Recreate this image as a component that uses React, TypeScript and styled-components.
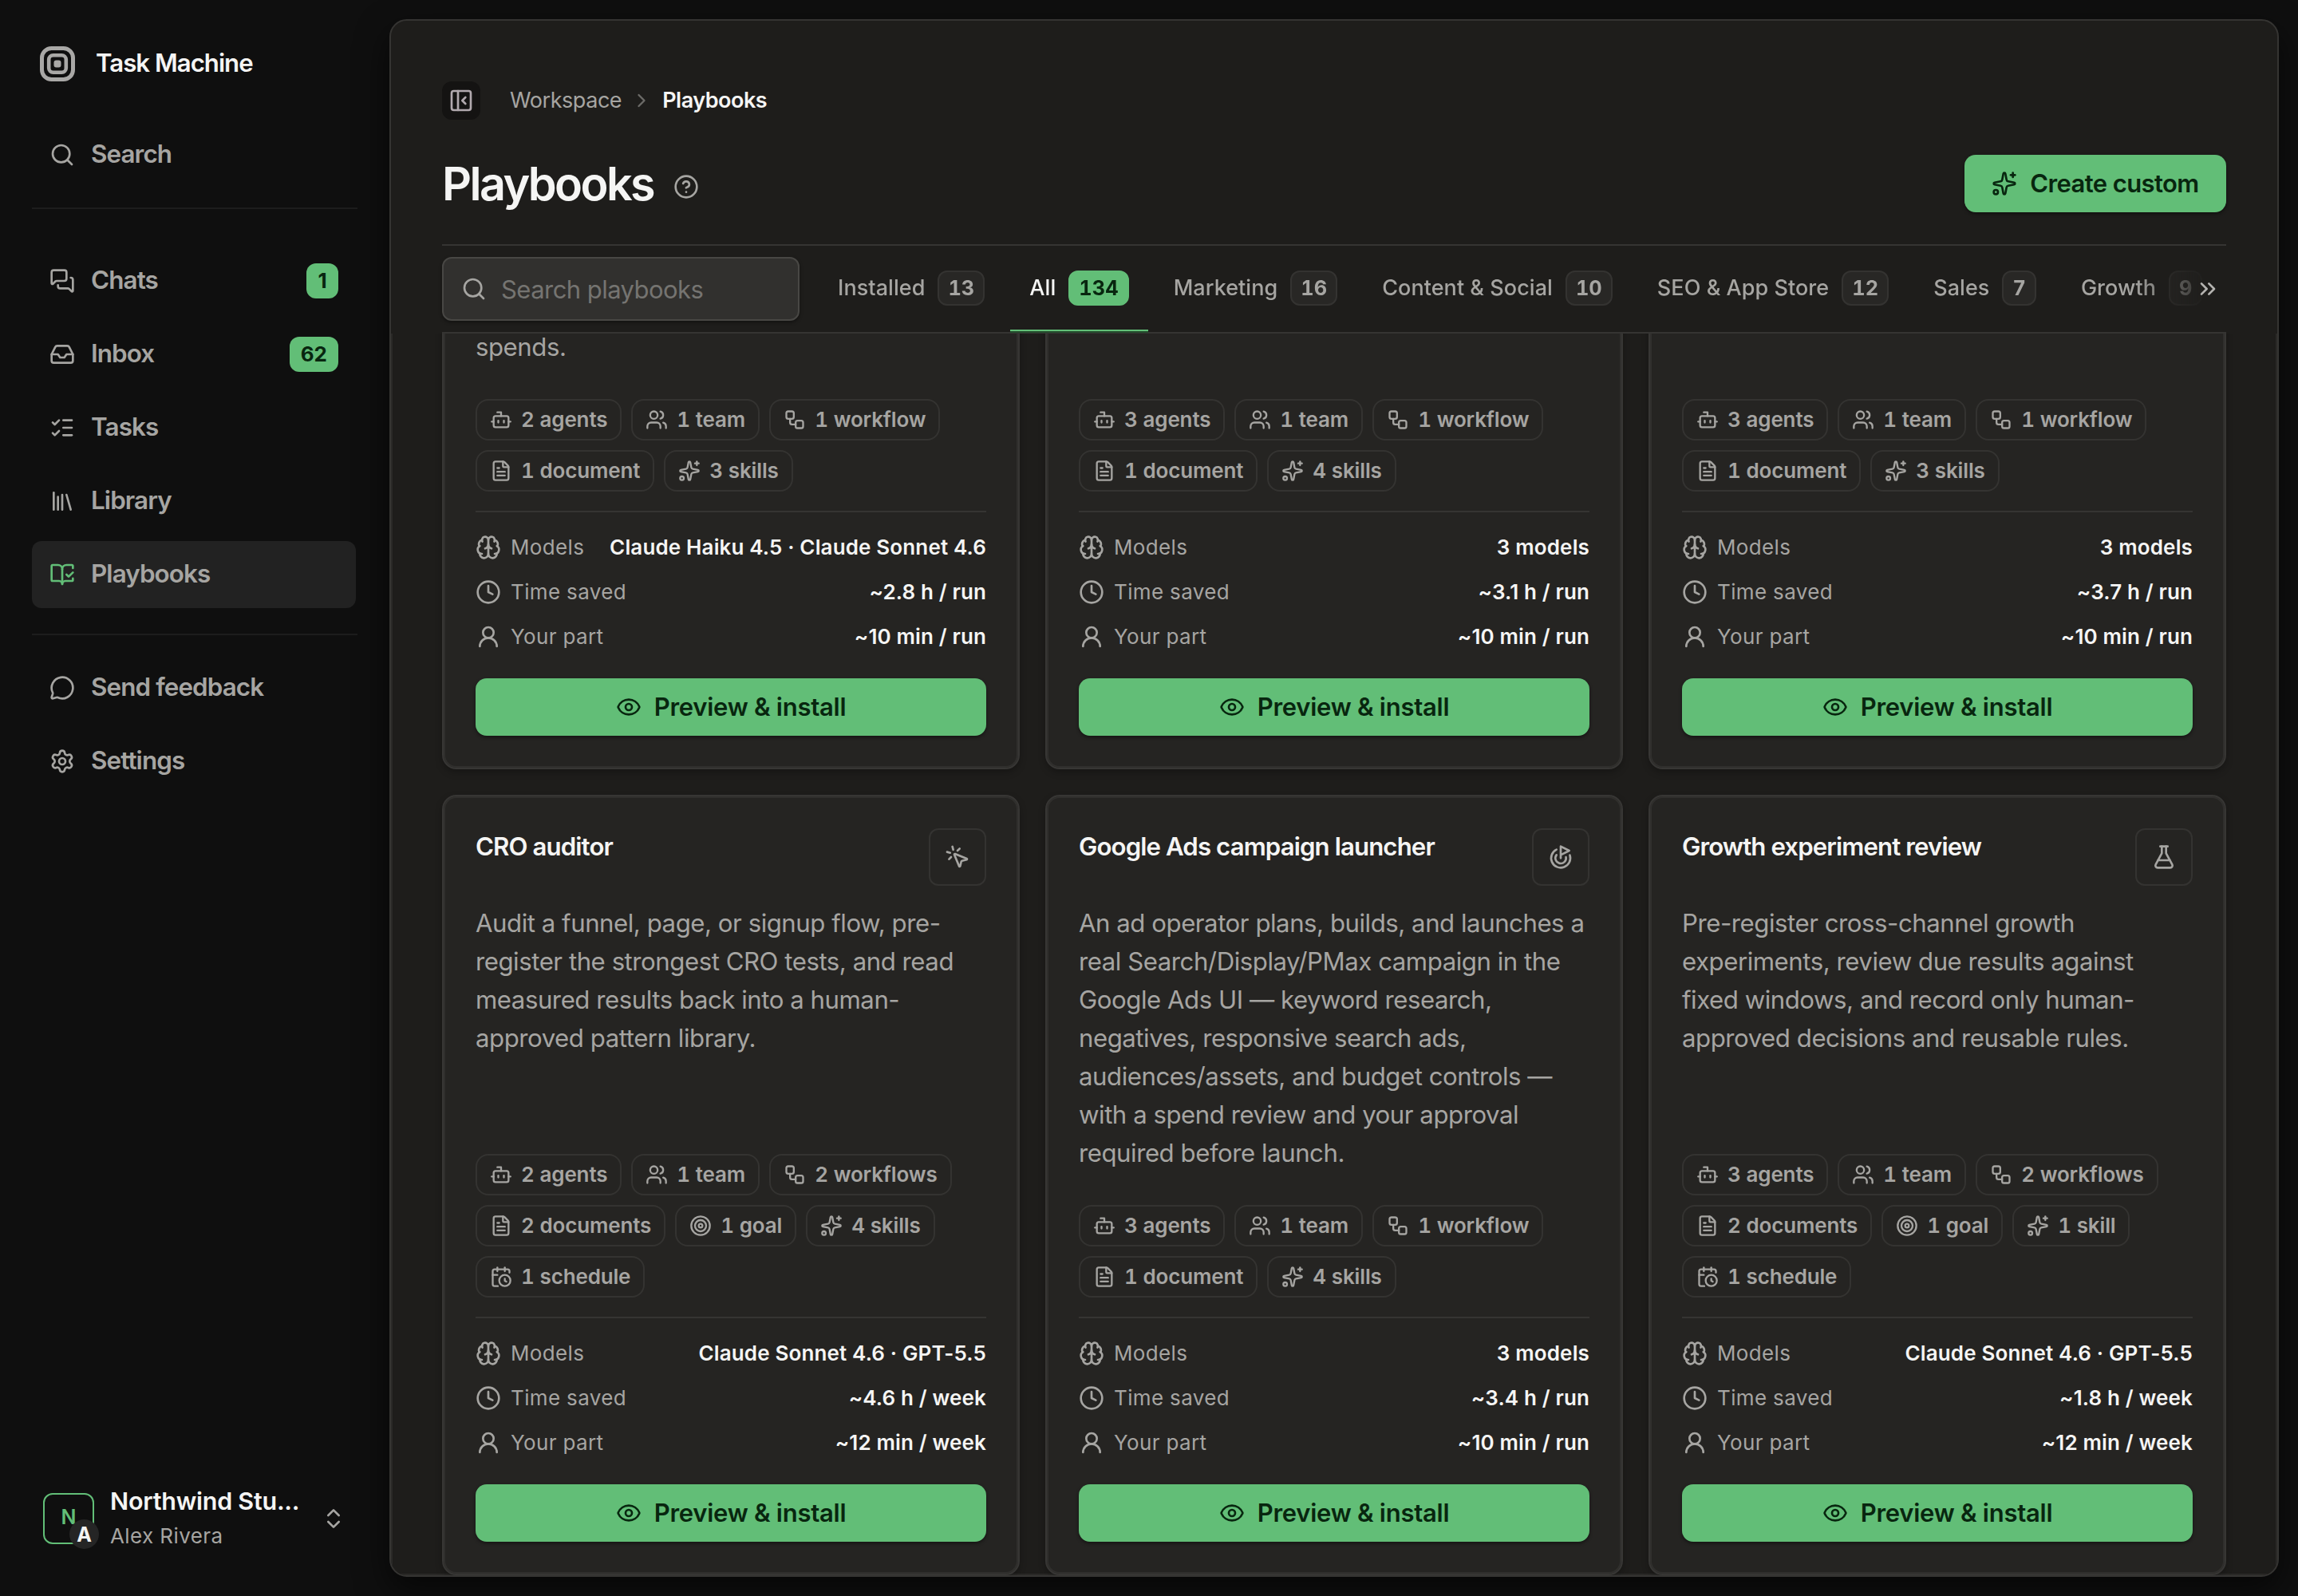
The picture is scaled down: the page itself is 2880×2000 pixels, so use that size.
import type { ReactNode } from 'react';
import styled, { createGlobalStyle, css } from 'styled-components';
import {
  BookOpenCheck,
  Bot,
  Brain,
  CalendarClock,
  ChevronRight,
  ChevronsRight,
  ChevronsUpDown,
  CircleQuestionMark,
  Clock,
  Eye,
  FileText,
  FlaskConical,
  Goal,
  Inbox,
  Library,
  ListChecks,
  MessageCircle,
  MessagesSquare,
  MousePointerClick,
  PanelLeftClose,
  Search,
  Settings,
  Sparkles,
  Target,
  UserRound,
  Users,
  Workflow,
  type LucideIcon,
} from 'lucide-react';

const GlobalStyle = createGlobalStyle`
  *, *::before, *::after {
    box-sizing: border-box;
  }

  body {
    margin: 0;
    background: #0f0f0f;
    color: #f5f5f4;
    font-family: Inter, "Liberation Sans", sans-serif;
    font-size: 31px;
  }

  button, input {
    font: inherit;
    color: inherit;
    border: 0;
    padding: 0;
  }

  svg {
    flex-shrink: 0;
  }
`;

const colors = {
  green: '#62be77',
  onGreen: '#08260f',
  muted: '#a6a5a2',
  text: '#f5f5f4',
  panel: '#1e1d1b',
  card: '#252422',
  line: '#353432',
};

const Shell = styled.div`
  display: grid;
  grid-template-columns: 488px 1fr;
  width: 2880px;
  height: 2000px;
  overflow: hidden;
`;

/* Text beside an icon sits a hair above the icon's centre line */
const Label = styled.span`
  padding-bottom: 2px;
`;

/* ---------- sidebar ---------- */

const Sidebar = styled.aside`
  display: flex;
  flex-direction: column;
  padding: 46px 40px 53px;
`;

const Brand = styled.div`
  display: flex;
  align-items: center;
  gap: 26px;
  height: 68px;
  padding-left: 10px;
  margin-bottom: 38px;
  font-size: 31.2px;
  font-weight: 600;
  letter-spacing: -1px;
`;

const NavGroup = styled.nav`
  display: flex;
  flex-direction: column;
  gap: 8px;
`;

const Divider = styled.hr<{ $before: number; $after: number }>`
  width: 408px;
  height: 2px;
  margin: ${({ $before, $after }) => `${$before}px 0 ${$after}px`};
  border: 0;
  background: #1d1d1d;
`;

const NavItem = styled.a<{ $active?: boolean }>`
  display: flex;
  align-items: center;
  gap: 20px;
  width: 406px;
  height: 84px;
  padding: 0 22px;
  border-radius: 12px;
  color: ${colors.muted};
  font-size: 31.4px;
  font-weight: 600;
  letter-spacing: -0.9px;

  ${({ $active }) =>
    $active &&
    css`
      background: #222222;

      svg {
        color: ${colors.green};
      }
    `}
`;

const NavCount = styled.span`
  display: grid;
  place-items: center;
  min-width: 40px;
  height: 44px;
  margin-left: auto;
  padding: 0 14px 2px;
  border-radius: 12px;
  background: ${colors.green};
  color: ${colors.onGreen};
  font-size: 26px;
  font-weight: 700;
  letter-spacing: 0;
`;

const Account = styled.div`
  display: flex;
  align-items: center;
  height: 88px;
  margin-top: auto;
  padding: 0 14px 0 14px;
`;

const Avatar = styled.div`
  position: relative;
  display: grid;
  place-items: center;
  width: 64px;
  height: 64px;
  padding-bottom: 4px;
  border: 2px solid ${colors.green};
  border-radius: 12px;
  color: ${colors.green};
  font-size: 25px;
  font-weight: 600;
`;

const AvatarBadge = styled.span`
  position: absolute;
  right: -8px;
  bottom: -8px;
  display: grid;
  place-items: center;
  width: 37px;
  height: 37px;
  border-radius: 50%;
  background: #252525;
  color: ${colors.text};
  font-size: 25px;
  font-weight: 700;
`;

const AccountText = styled.div`
  display: flex;
  flex-direction: column;
  gap: 4px;
  margin-left: 20px;
  width: 246px;
  line-height: 40px;
`;

const AccountName = styled.strong`
  font-size: 30.5px;
  font-weight: 600;
  letter-spacing: -0.25px;
  white-space: nowrap;
`;

const AccountUser = styled.span`
  color: ${colors.muted};
  font-size: 26px;
  letter-spacing: 0.4px;
`;

const AccountToggle = styled.span`
  display: flex;
  margin-left: auto;
  color: ${colors.muted};
`;

/* ---------- main panel ---------- */

const Panel = styled.main`
  display: flex;
  flex-direction: column;
  width: 2368px;
  height: 1952px;
  margin-top: 24px;
  overflow: hidden;
  border: 2px solid ${colors.line};
  border-radius: 22px;
  background: ${colors.panel};
  box-shadow: 0 16px 40px rgba(0, 0, 0, 0.6);
`;

const Header = styled.header`
  padding: 76px 64px 0;
`;

const Crumbs = styled.div`
  display: flex;
  align-items: center;
  height: 48px;
  color: ${colors.muted};
  font-size: 27px;
  letter-spacing: -0.45px;
`;

const CollapseButton = styled.button`
  display: grid;
  place-items: center;
  width: 48px;
  height: 48px;
  margin-right: 37px;
  border-radius: 12px;
  background: #141312;
  color: #b1a9ae;
`;

const CrumbArrow = styled(ChevronRight)`
  margin: 0 12px 0 11px;
  color: #6c6b68;
`;

const CurrentCrumb = styled.strong`
  padding-bottom: 2px;
  color: ${colors.text};
  font-weight: 600;
  letter-spacing: -0.5px;
`;

const TitleRow = styled.div`
  display: flex;
  align-items: center;
  height: 158px;
  border-bottom: 2px solid ${colors.line};
  padding-top: 4px;
`;

const Title = styled.h1`
  margin: 0 25px 0 0;
  font-size: 57.5px;
  font-weight: 600;
  letter-spacing: -2.6px;
`;

const HelpIcon = styled(CircleQuestionMark)`
  margin-top: 7px;
  color: ${colors.muted};
`;

const PrimaryButton = styled.button`
  display: flex;
  align-items: center;
  justify-content: center;
  gap: 16px;
  height: 72px;
  border-radius: 14px;
  background: ${colors.green};
  box-shadow: 0 2px 4px rgba(0, 0, 0, 0.45);
  color: ${colors.onGreen};
  font-size: 31px;
  font-weight: 600;
  letter-spacing: -0.25px;
`;

const CreateButton = styled(PrimaryButton)`
  width: 328px;
  margin-left: auto;
  letter-spacing: -0.6px;
`;

const Toolbar = styled.div`
  display: flex;
  align-items: center;
  height: 110px;
  margin: 0 64px;
  border-bottom: 2px solid ${colors.line};
`;

const SearchBox = styled.label`
  display: flex;
  align-items: center;
  flex-shrink: 0;
  gap: 18px;
  width: 448px;
  height: 80px;
  margin-right: 24px;
  padding: 0 22px;
  border: 2px solid #484744;
  border-radius: 12px;
  background: #31302e;
  box-shadow: 0 2px 4px rgba(0, 0, 0, 0.4);
  color: ${colors.muted};
`;

const SearchInput = styled.input`
  width: 100%;
  background: none;
  font-size: 31px;
  letter-spacing: -0.55px;
  outline: none;

  &::placeholder {
    color: #757471;
    opacity: 1;
  }
`;

const Tabs = styled.div`
  display: flex;
  flex: 1;
  gap: 8px;
  min-width: 0;
  height: 110px;
  overflow: hidden;
  mask-image: linear-gradient(90deg, #000 1648px, transparent 1750px);
`;

const Tab = styled.button<{ $active?: boolean }>`
  display: flex;
  align-items: center;
  flex-shrink: 0;
  gap: 16px;
  height: 110px;
  padding: 0 24px 2px;
  background: none;
  color: ${({ $active }) => ($active ? colors.text : colors.muted)};
  font-size: 27px;
  font-weight: 500;
  letter-spacing: 0.05px;
  white-space: nowrap;

  ${({ $active }) =>
    $active &&
    css`
      box-shadow: inset 0 -2px #234a2c, inset 0 -4px ${colors.green};
    `}
`;

const TabCount = styled.span<{ $active?: boolean }>`
  display: grid;
  place-items: center;
  height: 44px;
  padding: 0 11px 1px;
  border: 2px solid ${({ $active }) => ($active ? colors.green : '#343331')};
  border-radius: 12px;
  background: ${({ $active }) => ($active ? colors.green : '#282725')};
  color: ${({ $active }) => ($active ? colors.onGreen : 'inherit')};
  font-size: 25.4px;
  font-weight: 700;
  font-variant-numeric: tabular-nums;
`;

const MoreTabs = styled.button`
  display: flex;
  margin: 0 7px 0 -39px;
  background: none;
  color: #b4b3b0;
  z-index: 1;
`;

/* The list is scrolled, so it is anchored to the bottom and cut at the top */
const ScrollArea = styled.section`
  display: flex;
  flex: 1;
  flex-direction: column;
  justify-content: flex-end;
  min-height: 0;
  padding: 0 64px;
  overflow: hidden;
  box-shadow: inset 2px 0 #2a2927, inset -2px 0 #2a2927, inset 0 -2px #2a2927;
`;

const Grid = styled.div`
  display: grid;
  flex-shrink: 0;
  grid-template-columns: repeat(3, 1fr);
  grid-template-rows: 640px 978px;
  gap: 32px;
`;

/* ---------- playbook card ---------- */

const Card = styled.article`
  display: flex;
  flex-direction: column;
  min-width: 0;
  padding: 40px;
  border: 2px solid #373634;
  border-radius: 18px;
  background: ${colors.card};
  box-shadow: inset 0 0 0 2px #302f2d, 0 4px 8px rgba(0, 0, 0, 0.25);
`;

const CardHead = styled.div`
  display: flex;
  justify-content: space-between;
  height: 72px;
  margin-bottom: 23px;
`;

const CardTitle = styled.h2`
  margin: 3px 0 0;
  font-size: 31.2px;
  font-weight: 600;
  line-height: 40px;
  letter-spacing: -0.9px;
`;

const CardIcon = styled.span`
  display: grid;
  place-items: center;
  width: 72px;
  height: 72px;
  border: 2px solid #343331;
  border-radius: 12px;
  color: ${colors.muted};
`;

const Description = styled.p<{ $tail?: boolean }>`
  margin: ${({ $tail }) => ($tail ? 'auto 0 0' : 0)};
  color: ${colors.muted};
  font-size: 31.2px;
  line-height: ${({ $tail }) => ($tail ? '32px' : '48px')};
  letter-spacing: -0.47px;
  white-space: pre;
`;

const Chips = styled.div<{ $tail?: boolean }>`
  display: flex;
  flex-wrap: wrap;
  gap: 12px;
  margin-top: ${({ $tail }) => ($tail ? '49px' : 'auto')};
  padding-bottom: 24px;
  border-bottom: 2px solid ${colors.line};
`;

const Chip = styled.span`
  display: flex;
  align-items: center;
  gap: 11px;
  height: 52px;
  padding: 0 16px;
  border: 2px solid #343331;
  border-radius: 16px;
  color: ${colors.muted};
  font-size: 26px;
  font-weight: 600;
  font-variant-numeric: tabular-nums;
  letter-spacing: -0.15px;
  white-space: nowrap;
`;

const Facts = styled.dl`
  display: grid;
  gap: 16px;
  margin: 24px 0 32px;
`;

const Fact = styled.div`
  display: flex;
  align-items: center;
  gap: 12px;
  height: 40px;
  color: ${colors.muted};
  font-size: 26px;
  letter-spacing: 0.35px;
`;

const FactName = styled.dt`
  padding-bottom: 2px;
`;

const FactValue = styled.dd`
  margin: 0 0 0 auto;
  padding-bottom: 2px;
  color: ${colors.text};
  font-weight: 600;
  letter-spacing: 0.14px;
  white-space: nowrap;
`;

const Logo = () => (
  <svg width="44" height="44" viewBox="0 0 44 44" fill="none" stroke="#a9a8a6">
    <rect x="2.5" y="2.5" width="39" height="39" rx="12" strokeWidth="5" />
    <rect x="11.2" y="11.2" width="21.6" height="21.6" rx="5.5" strokeWidth="4.6" />
    <rect x="17.5" y="17.5" width="9" height="9" rx="3" fill="#a9a8a6" stroke="none" />
  </svg>
);

interface NavEntry {
  label: string;
  icon: LucideIcon;
  count?: number;
  active?: boolean;
}

const mainNav: NavEntry[] = [
  { label: 'Chats', icon: MessagesSquare, count: 1 },
  { label: 'Inbox', icon: Inbox, count: 62 },
  { label: 'Tasks', icon: ListChecks },
  { label: 'Library', icon: Library },
  { label: 'Playbooks', icon: BookOpenCheck, active: true },
];

const footerNav: NavEntry[] = [
  { label: 'Send feedback', icon: MessageCircle },
  { label: 'Settings', icon: Settings },
];

const tabs = [
  { label: 'Installed', count: 13 },
  { label: 'All', count: 134, active: true },
  { label: 'Marketing', count: 16 },
  { label: 'Content & Social', count: 10 },
  { label: 'SEO & App Store', count: 12 },
  { label: 'Sales', count: 7 },
  { label: 'Growth', count: 9 },
];

const chipIcons: Record<string, LucideIcon> = {
  agent: Bot,
  team: Users,
  workflow: Workflow,
  document: FileText,
  goal: Target,
  skill: Sparkles,
  schedule: CalendarClock,
};

interface Playbook {
  title?: string;
  icon?: LucideIcon;
  description?: string;
  parts: [number, string][];
  models: string;
  saved: string;
  effort: string;
}

const playbooks: Playbook[] = [
  {
    description: 'spends.',
    parts: [[2, 'agent'], [1, 'team'], [1, 'workflow'], [1, 'document'], [3, 'skill']],
    models: 'Claude Haiku 4.5 · Claude Sonnet 4.6',
    saved: '~2.8 h / run',
    effort: '~10 min / run',
  },
  {
    parts: [[3, 'agent'], [1, 'team'], [1, 'workflow'], [1, 'document'], [4, 'skill']],
    models: '3 models',
    saved: '~3.1 h / run',
    effort: '~10 min / run',
  },
  {
    parts: [[3, 'agent'], [1, 'team'], [1, 'workflow'], [1, 'document'], [3, 'skill']],
    models: '3 models',
    saved: '~3.7 h / run',
    effort: '~10 min / run',
  },
  {
    title: 'CRO auditor',
    icon: MousePointerClick,
    description:
      'Audit a funnel, page, or signup flow, pre-\nregister the strongest CRO tests, and read\nmeasured results back into a human-\napproved pattern library.',
    parts: [[2, 'agent'], [1, 'team'], [2, 'workflow'], [2, 'document'], [1, 'goal'], [4, 'skill'], [1, 'schedule']],
    models: 'Claude Sonnet 4.6 · GPT-5.5',
    saved: '~4.6 h / week',
    effort: '~12 min / week',
  },
  {
    title: 'Google Ads campaign launcher',
    icon: Goal,
    description:
      'An ad operator plans, builds, and launches a\nreal Search/Display/PMax campaign in the\nGoogle Ads UI — keyword research,\nnegatives, responsive search ads,\naudiences/assets, and budget controls —\nwith a spend review and your approval\nrequired before launch.',
    parts: [[3, 'agent'], [1, 'team'], [1, 'workflow'], [1, 'document'], [4, 'skill']],
    models: '3 models',
    saved: '~3.4 h / run',
    effort: '~10 min / run',
  },
  {
    title: 'Growth experiment review',
    icon: FlaskConical,
    description:
      'Pre-register cross-channel growth\nexperiments, review due results against\nfixed windows, and record only human-\napproved decisions and reusable rules.',
    parts: [[3, 'agent'], [1, 'team'], [2, 'workflow'], [2, 'document'], [1, 'goal'], [1, 'skill'], [1, 'schedule']],
    models: 'Claude Sonnet 4.6 · GPT-5.5',
    saved: '~1.8 h / week',
    effort: '~12 min / week',
  },
];

const NavLink = ({ label, icon: Icon, count, active }: NavEntry) => (
  <NavItem $active={active}>
    <Icon size={32} />
    <Label>{label}</Label>
    {count !== undefined && <NavCount>{count}</NavCount>}
  </NavItem>
);

const FactRow = ({ icon: Icon, label, children }: { icon: LucideIcon; label: string; children: ReactNode }) => (
  <Fact>
    <Icon size={32} />
    <FactName>{label}</FactName>
    <FactValue>{children}</FactValue>
  </Fact>
);

const PlaybookCard = ({ playbook }: { playbook: Playbook }) => {
  const { title, icon: Icon, description, parts, models, saved, effort } = playbook;
  const tail = !title && Boolean(description);

  return (
    <Card>
      {title && Icon && (
        <CardHead>
          <CardTitle>{title}</CardTitle>
          <CardIcon>
            <Icon size={32} />
          </CardIcon>
        </CardHead>
      )}
      {description && <Description $tail={tail}>{description}</Description>}
      <Chips $tail={tail}>
        {parts.map(([count, kind]) => {
          const PartIcon = chipIcons[kind];
          return (
            <Chip key={kind}>
              <PartIcon size={28} />
              <Label>{`${count} ${kind}${count > 1 ? 's' : ''}`}</Label>
            </Chip>
          );
        })}
      </Chips>
      <Facts>
        <FactRow icon={Brain} label="Models">{models}</FactRow>
        <FactRow icon={Clock} label="Time saved">{saved}</FactRow>
        <FactRow icon={UserRound} label="Your part">{effort}</FactRow>
      </Facts>
      <PrimaryButton>
        <Eye size={32} />
        <Label>Preview &amp; install</Label>
      </PrimaryButton>
    </Card>
  );
};

const App = () => (
  <>
    <GlobalStyle />
    <Shell>
      <Sidebar>
        <Brand>
          <Logo />
          <Label>Task Machine</Label>
        </Brand>
        <NavLink label="Search" icon={Search} />
        <Divider $before={24} $after={48} />
        <NavGroup>
          {mainNav.map((item) => (
            <NavLink key={item.label} {...item} />
          ))}
        </NavGroup>
        <Divider $before={32} $after={24} />
        <NavGroup>
          {footerNav.map((item) => (
            <NavLink key={item.label} {...item} />
          ))}
        </NavGroup>
        <Account>
          <Avatar>
            N
            <AvatarBadge>A</AvatarBadge>
          </Avatar>
          <AccountText>
            <AccountName>Northwind Stu...</AccountName>
            <AccountUser>Alex Rivera</AccountUser>
          </AccountText>
          <AccountToggle>
            <ChevronsUpDown size={32} />
          </AccountToggle>
        </Account>
      </Sidebar>

      <Panel>
        <Header>
          <Crumbs>
            <CollapseButton>
              <PanelLeftClose size={32} />
            </CollapseButton>
            <Label>Workspace</Label>
            <CrumbArrow size={28} />
            <CurrentCrumb>Playbooks</CurrentCrumb>
          </Crumbs>
          <TitleRow>
            <Title>Playbooks</Title>
            <HelpIcon size={32} />
            <CreateButton>
              <Sparkles size={32} />
              <Label>Create custom</Label>
            </CreateButton>
          </TitleRow>
        </Header>
        <Toolbar>
          <SearchBox>
            <Search size={32} />
            <SearchInput placeholder="Search playbooks" />
          </SearchBox>
          <Tabs>
            {tabs.map(({ label, count, active }) => (
              <Tab key={label} $active={active}>
                <Label>{label}</Label>
                <TabCount $active={active}>{count}</TabCount>
              </Tab>
            ))}
          </Tabs>
          <MoreTabs>
            <ChevronsRight size={32} />
          </MoreTabs>
        </Toolbar>
        <ScrollArea>
          <Grid>
            {playbooks.map((playbook, index) => (
              <PlaybookCard key={index} playbook={playbook} />
            ))}
          </Grid>
        </ScrollArea>
      </Panel>
    </Shell>
  </>
);

export default App;
